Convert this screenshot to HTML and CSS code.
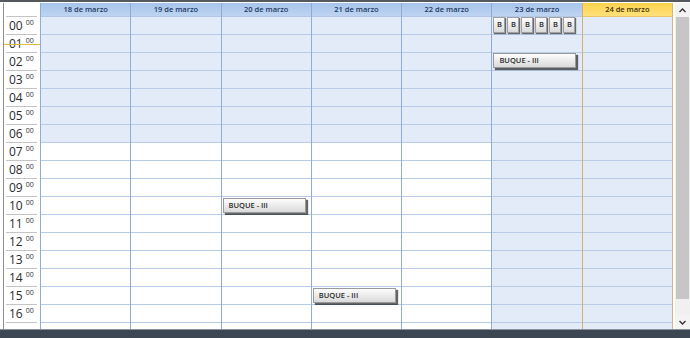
FILE: index.html
```html
<!DOCTYPE html>
<html lang="es">
<head>
  <meta charset="UTF-8" />
  <title>Agenda semanal</title>
  <link rel="stylesheet" href="styles.css">
</head>
<body>
  <div class="top-edge"></div>

  <div class="main">
    <div class="calendar">
      <!-- hour labels -->
      <div class="time-col">
        <div class="corner"></div>
        <div class="hour">00<span class="min">00</span></div>
        <div class="hour now">01<span class="min">00</span></div>
        <div class="hour">02<span class="min">00</span></div>
        <div class="hour">03<span class="min">00</span></div>
        <div class="hour">04<span class="min">00</span></div>
        <div class="hour">05<span class="min">00</span></div>
        <div class="hour">06<span class="min">00</span></div>
        <div class="hour">07<span class="min">00</span></div>
        <div class="hour">08<span class="min">00</span></div>
        <div class="hour">09<span class="min">00</span></div>
        <div class="hour">10<span class="min">00</span></div>
        <div class="hour">11<span class="min">00</span></div>
        <div class="hour">12<span class="min">00</span></div>
        <div class="hour">13<span class="min">00</span></div>
        <div class="hour">14<span class="min">00</span></div>
        <div class="hour">15<span class="min">00</span></div>
        <div class="hour">16<span class="min">00</span></div>
      </div>

      <div class="day">
        <div class="day-head">18 de marzo</div>
        <div class="cell off"></div><div class="cell off"></div><div class="cell off"></div><div class="cell off"></div>
        <div class="cell off"></div><div class="cell off"></div><div class="cell off"></div>
        <div class="cell"></div><div class="cell"></div><div class="cell"></div><div class="cell"></div><div class="cell"></div>
        <div class="cell"></div><div class="cell"></div><div class="cell"></div><div class="cell"></div><div class="cell"></div>
      </div>

      <div class="day">
        <div class="day-head">19 de marzo</div>
        <div class="cell off"></div><div class="cell off"></div><div class="cell off"></div><div class="cell off"></div>
        <div class="cell off"></div><div class="cell off"></div><div class="cell off"></div>
        <div class="cell"></div><div class="cell"></div><div class="cell"></div><div class="cell"></div><div class="cell"></div>
        <div class="cell"></div><div class="cell"></div><div class="cell"></div><div class="cell"></div><div class="cell"></div>
      </div>

      <div class="day">
        <div class="day-head">20 de marzo</div>
        <div class="cell off"></div><div class="cell off"></div><div class="cell off"></div><div class="cell off"></div>
        <div class="cell off"></div><div class="cell off"></div><div class="cell off"></div>
        <div class="cell"></div><div class="cell"></div><div class="cell"></div>
        <div class="cell"><div class="appt">BUQUE - III</div></div>
        <div class="cell"></div>
        <div class="cell"></div><div class="cell"></div><div class="cell"></div><div class="cell"></div><div class="cell"></div>
      </div>

      <div class="day">
        <div class="day-head">21 de marzo</div>
        <div class="cell off"></div><div class="cell off"></div><div class="cell off"></div><div class="cell off"></div>
        <div class="cell off"></div><div class="cell off"></div><div class="cell off"></div>
        <div class="cell"></div><div class="cell"></div><div class="cell"></div><div class="cell"></div><div class="cell"></div>
        <div class="cell"></div><div class="cell"></div><div class="cell"></div>
        <div class="cell"><div class="appt">BUQUE - III</div></div>
        <div class="cell"></div>
      </div>

      <div class="day">
        <div class="day-head">22 de marzo</div>
        <div class="cell off"></div><div class="cell off"></div><div class="cell off"></div><div class="cell off"></div>
        <div class="cell off"></div><div class="cell off"></div><div class="cell off"></div>
        <div class="cell"></div><div class="cell"></div><div class="cell"></div><div class="cell"></div><div class="cell"></div>
        <div class="cell"></div><div class="cell"></div><div class="cell"></div><div class="cell"></div><div class="cell"></div>
      </div>

      <div class="day weekend">
        <div class="day-head">23 de marzo</div>
        <div class="cell">
          <div class="chips">
            <div class="chip">B</div><div class="chip">B</div><div class="chip">B</div>
            <div class="chip">B</div><div class="chip">B</div><div class="chip">B</div>
          </div>
        </div>
        <div class="cell"></div>
        <div class="cell"><div class="appt flush">BUQUE - III</div></div>
        <div class="cell"></div><div class="cell"></div><div class="cell"></div><div class="cell"></div>
        <div class="cell"></div><div class="cell"></div><div class="cell"></div><div class="cell"></div><div class="cell"></div>
        <div class="cell"></div><div class="cell"></div><div class="cell"></div><div class="cell"></div><div class="cell"></div>
      </div>

      <div class="day weekend today">
        <div class="day-head">24 de marzo</div>
        <div class="cell"></div><div class="cell"></div><div class="cell"></div><div class="cell"></div><div class="cell"></div>
        <div class="cell"></div><div class="cell"></div><div class="cell"></div><div class="cell"></div><div class="cell"></div>
        <div class="cell"></div><div class="cell"></div><div class="cell"></div><div class="cell"></div><div class="cell"></div>
        <div class="cell"></div><div class="cell"></div>
      </div>
    </div>

    <div class="scrollbar">
      <div class="scroll-btn">
        <svg width="7" height="5" viewBox="0 0 7 5"><path d="M0.5 4 L3.5 1 L6.5 4" fill="none" stroke="#333" stroke-width="1.4"/></svg>
      </div>
      <div class="scroll-thumb"></div>
      <div class="scroll-track"></div>
      <div class="scroll-btn">
        <svg width="7" height="5" viewBox="0 0 7 5"><path d="M0.5 1 L3.5 4 L6.5 1" fill="none" stroke="#333" stroke-width="1.4"/></svg>
      </div>
    </div>
  </div>

  <div class="footer"></div>
</body>
</html>
```

FILE: styles.css
```css
* {
  margin: 0;
  padding: 0;
  box-sizing: border-box;
}

body {
  width: 690px;
  height: 338px;
  overflow: hidden;
  background-color: #fff;
  font-family: 'Open Sans', 'DejaVu Sans', sans-serif;
  color: #222;
}

.top-edge {
  height: 2px;
  background-color: #55595e;
}

.main {
  height: 327px;
  padding-top: 1px;
  display: flex;
}

.calendar {
  width: 670px;
  height: 326px;
  margin-left: 3px;
  border-left: 1px solid #8d8d8d;
  display: flex;
  overflow: hidden;
}

/* hour labels */

.time-col {
  width: 36px;
  flex-shrink: 0;
  background-color: #fff;
}

.corner {
  height: 14px;
  margin: 0 3px 0 2px;
  border-bottom: 1px solid #c4c4c4;
}

.hour {
  position: relative;
  height: 18px;
  margin: 0 3px 0 2px;
  padding-left: 3px;
  border-bottom: 1px solid #c4c4c4;
  font-size: 12px;
  line-height: 17px;
  color: #2b2b2b;
}

.hour .min {
  display: inline-block;
  vertical-align: top;
  margin-left: 3px;
  margin-top: 2px;
  font-size: 7px;
  line-height: 8px;
  color: #333;
}

.hour.now::after {
  content: '';
  position: absolute;
  left: -3px;
  right: -3px;
  top: 9px;
  height: 1px;
  background-color: #d9bf3c;
}

/* day columns */

.day {
  flex: 1;
  min-width: 0;
  border-left: 1px solid #8eacd6;
  background-color: #fff;
}

.day.weekend {
  background-color: #e3ebf8;
}

.day.today {
  border-left-color: #d2b07a;
  border-right: 1px solid #d9b47a;
}

.day-head {
  height: 14px;
  border-bottom: 1px solid #b3c7e4;
  background: linear-gradient(#a7c4eb, #bed4f1);
  font-size: 7.5px;
  font-weight: 600;
  line-height: 13px;
  text-align: center;
  color: #1d3a63;
  white-space: nowrap;
}

.today .day-head {
  background: linear-gradient(#fdd24c, #ffe07a);
  border-bottom-color: #e9c56a;
  color: #3d3310;
}

.cell {
  display: flow-root;
  height: 18px;
  border-bottom: 1px solid #b8cbe7;
  background-color: #fff;
}

.cell.off,
.weekend .cell {
  background-color: #e3ebf8;
}

/* appointments */

.appt {
  width: 83px;
  height: 15px;
  margin: 1px 0 0 1px;
  padding-left: 5px;
  border: 1px solid #9a9a9a;
  background: linear-gradient(#fdfdfd, #dadada);
  box-shadow: 2px 2px 1px rgba(0, 0, 0, 0.6);
  font-size: 7.5px;
  font-weight: 600;
  line-height: 13px;
  color: #2a2a2a;
  white-space: nowrap;
}

.appt.flush {
  margin-top: 0;
}

.chips {
  display: flex;
  gap: 2px;
  padding-left: 1px;
}

.chip {
  width: 12px;
  height: 16px;
  border: 1px solid #a0a0a0;
  background: linear-gradient(#fdfdfd, #dadada);
  box-shadow: 1px 1px 1px rgba(0, 0, 0, 0.55);
  font-size: 7.5px;
  font-weight: 600;
  line-height: 13px;
  text-align: center;
  color: #2a2a2a;
}

/* scrollbar */

.scrollbar {
  width: 15px;
  height: 326px;
  margin-left: 2px;
  display: flex;
  flex-direction: column;
  background-color: #f0f0f0;
}

.scroll-btn {
  height: 14px;
  display: flex;
  align-items: center;
  justify-content: center;
  background-color: #f3f3f3;
}

.scroll-thumb {
  height: 282px;
  margin: 0 1px;
  background-color: #c6c6c6;
}

.scroll-track {
  flex: 1;
}

.footer {
  height: 9px;
  border-top: 1px solid #8a939c;
  background-color: #3c4753;
}
```
